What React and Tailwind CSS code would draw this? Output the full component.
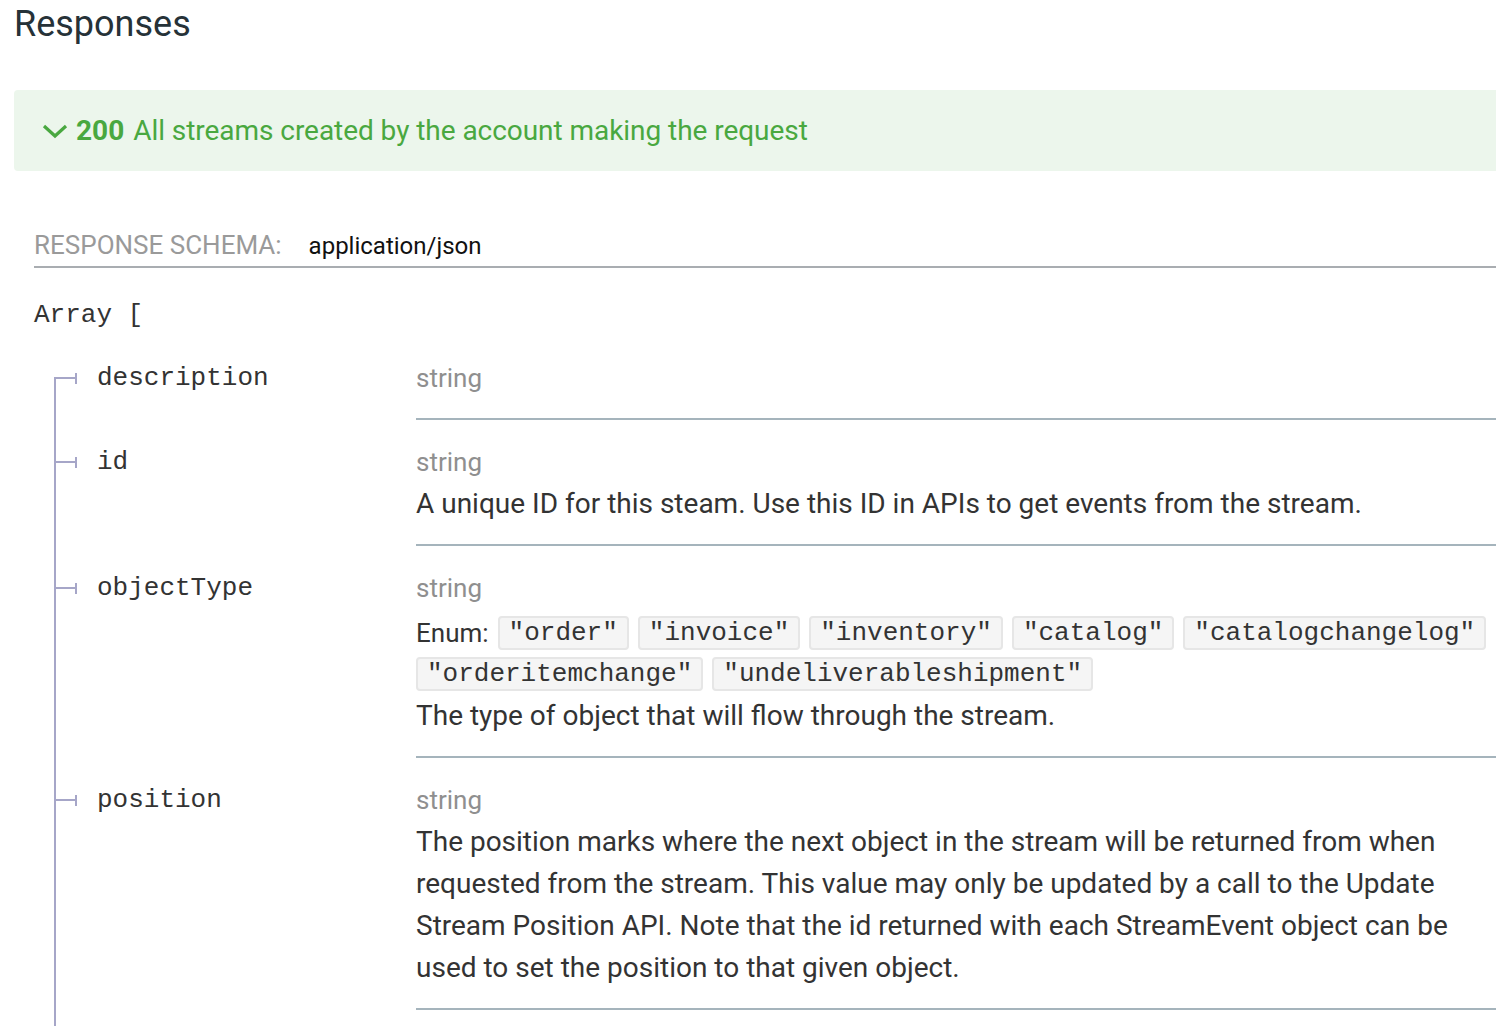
import React from "react";

const TREE = "bg-[#a6a6c8]";

function Row({ name, first, children }) {
  return (
    <div className="flex">
      <div className="flex w-[382px] shrink-0">
        <div className={`ml-[20px] w-[2px] ${TREE} ${first ? "mt-[41px]" : ""}`} />
        <div className="flex items-start pt-[21px]">
          <div className="flex h-[42px] items-center">
            <div className={`h-[2px] w-[19px] ${TREE}`} />
            <div className={`h-[11px] w-[2px] ${TREE}`} />
          </div>
          <span className="ml-[20px] font-['Liberation_Mono',monospace] text-[26px] leading-[42px] text-[#333]">
            {name}
          </span>
        </div>
      </div>
      <div className="flex-1 border-b-2 border-[#a5b4bc] pt-[21px] pb-[19px]">
        <div className="text-[26px] leading-[42px] text-[#8f8f8f]">string</div>
        {children}
      </div>
    </div>
  );
}

function Chip({ v }) {
  return (
    <span className="inline-flex h-[34px] items-center rounded-[4px] border-2 border-[#e6e6e6] bg-[#f5f5f5] px-[9px] font-['Liberation_Mono',monospace] text-[26px] leading-[30px] text-[#333]">
      "{v}"
    </span>
  );
}

export default function App() {
  return (
    <div className="h-[1026px] w-[1496px] overflow-hidden bg-white font-['Roboto',sans-serif]">
      <div className="w-[1500px]">
        <h3 className="pl-[14px] text-[36px] font-normal leading-[48px] text-[#263238]">Responses</h3>
        <div className="ml-[14px] mt-[42px] flex h-[81px] w-[1500px] items-center rounded-[4px] bg-[#ecf6ec] pl-[28px] text-[28px] text-[#49a840]">
          <svg width="26" height="16" viewBox="0 0 26 16" className="mr-[8px]">
            <polyline points="2,3 13,13 24,3" fill="none" stroke="#49a840" strokeWidth="3.2" />
          </svg>
          <span className="font-bold">200</span>
          <span className="ml-[9px] tracking-[-0.05px]">All streams created by the account making the request</span>
        </div>

        <div className="ml-[34px] w-[1466px]">
          <div className="mt-[54px] flex items-baseline border-b-2 border-[#a9adb1] leading-[40px]">
            <span className="text-[26px] uppercase text-[#9a9a9a]">Response Schema:</span>
            <span className="ml-[27px] text-[24px] text-[#111]">application/json</span>
          </div>
          <div className="mt-[26px] font-['Liberation_Mono',monospace] text-[26px] leading-[42px] text-[#333]">
            Array [
          </div>
          <div className="text-[28px] leading-[42px] text-[#333]">
            <Row name="description" first />
            <Row name="id">
              <div>A unique ID for this steam. Use this ID in APIs to get events from the stream.</div>
            </Row>
            <Row name="objectType">
              <div className="flex flex-wrap items-center gap-x-[9px] gap-y-[7px] pt-[7px] pb-[4px]">
                <span className="text-[26px] leading-[34px]">Enum:</span>
                <Chip v="order" />
                <Chip v="invoice" />
                <Chip v="inventory" />
                <Chip v="catalog" />
                <Chip v="catalogchangelog" />
                <Chip v="orderitemchange" />
                <Chip v="undeliverableshipment" />
              </div>
              <div>The type of object that will flow through the stream.</div>
            </Row>
            <Row name="position">
              <div>
                The position marks where the next object in the stream will be returned from when requested from the
                stream. This value may only be updated by a call to the Update Stream Position API. Note that the id
                returned with each StreamEvent object can be used to set the position to that given object.
              </div>
            </Row>
            <div className="flex h-[60px]">
              <div className={`ml-[20px] w-[2px] ${TREE}`} />
            </div>
          </div>
        </div>
      </div>
    </div>
  );
}
